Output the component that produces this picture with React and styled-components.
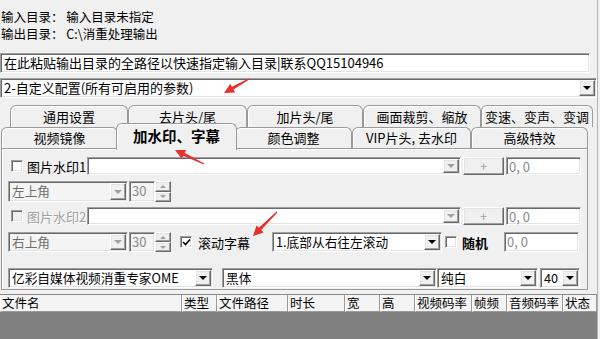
import React from "react";
import styled, { createGlobalStyle, css } from "styled-components";

const GlobalStyle = createGlobalStyle`
  html, body { margin: 0; padding: 0; background: #f0f0f0; }
  body {
    font-family: "Noto Sans CJK SC", "Microsoft YaHei", sans-serif;
    font-size: 13px;
    color: #000;
  }
`;

const sunken = css`
  box-sizing: border-box;
  border: 1px solid;
  border-color: #a0a0a0 #ffffff #ffffff #a0a0a0;
  box-shadow: inset 1px 1px 0 #696969, inset -1px -1px 0 #e3e3e3;
`;

const raised = css`
  box-sizing: border-box;
  border: 1px solid;
  border-color: #ffffff #696969 #696969 #ffffff;
  box-shadow: inset -1px -1px 0 #a0a0a0, inset 1px 1px 0 #e3e3e3;
  background: #f0f0f0;
`;

const Window = styled.div`
  position: relative;
  width: 597px;
  height: 339px;
  overflow: hidden;
  border-right: 1px solid #b4b4b4;
  display: flex;
  flex-direction: column;
`;

const Info = styled.div`
  padding: 8px 0 0 1px;
`;

const Line = styled.div`
  font-size: 12.5px;
  line-height: 17px;
  height: 17px;
  white-space: pre;
`;

const PathInput = styled.div`
  ${sunken};
  margin-top: 11px;
  width: 590px;
  height: 20px;
  background: #fff;
  padding-left: 3px;
  font-size: 13px;
  line-height: 18px;
  white-space: nowrap;
`;

const Combo = styled.div`
  ${sunken};
  width: ${(p) => p.$w}px;
  height: 100%;
  display: flex;
  align-items: stretch;
  background: ${(p) => (p.$off ? "#f4f4f4" : "#fff")};
  color: ${(p) => (p.$off ? "#6d6d6d" : "#000")};
  flex-shrink: 0;
`;

const ComboText = styled.div`
  flex: 1;
  padding-left: 3px;
  font-size: ${(p) => p.$fs || 12.7}px;
  line-height: 17px;
  white-space: nowrap;
  overflow: hidden;
`;

const ArrowBtn = styled.div`
  ${raised};
  width: 16px;
  margin: 1px 1px 1px 0;
  display: flex;
  align-items: center;
  justify-content: center;
`;

const Tri = styled.span`
  width: 0;
  height: 0;
  border-left: ${(p) => (p.$small ? 3 : 4)}px solid transparent;
  border-right: ${(p) => (p.$small ? 3 : 4)}px solid transparent;
  border-${(p) => (p.$up ? "bottom" : "top")}: ${(p) => (p.$small ? 3 : 4)}px solid
    ${(p) => (p.$off ? "#a0a0a0" : "#000")};
`;

const Preset = styled.div`
  margin-top: 5px;
  height: 20px;
  display: flex;
`;

const Tabs = styled.div`
  margin-top: 7px;
  display: flex;
  flex-direction: column;
`;

const TabRow = styled.div`
  display: flex;
  height: ${(p) => p.$h}px;
  padding-left: ${(p) => p.$indent}px;
  position: relative;
`;

const Tab = styled.div`
  box-sizing: border-box;
  width: ${(p) => p.$w}px;
  height: ${(p) => p.$h}px;
  flex-shrink: 0;
  border: 1px solid #9a9a9a;
  border-bottom: none;
  border-radius: 6px 6px 0 0;
  box-shadow: inset 1px 1px 0 #ffffff;
  background: #f0f0f0;
  text-align: center;
  font-size: 13px;
  line-height: ${(p) => p.$lh}px;
  white-space: nowrap;
  ${(p) =>
    p.$active &&
    css`
      position: relative;
      z-index: 2;
      width: ${p.$w + 4}px;
      margin: -4px -2px 0;
      height: ${p.$h + 6}px;
      font-size: 14.5px;
      font-weight: 700;
      line-height: ${p.$lh + 3}px;
    `}
`;

const Panel = styled.div`
  box-sizing: border-box;
  margin-left: 1px;
  width: 587px;
  height: 142px;
  border: 1px solid #9a9a9a;
  box-shadow: inset 1px 1px 0 #ffffff;
  padding: 0 0 0 6px;
  display: flex;
  flex-direction: column;
`;

const Row = styled.div`
  display: flex;
  align-items: center;
  height: ${(p) => p.$h}px;
  margin-top: ${(p) => p.$mt}px;
`;

const Box = styled.div`
  ${sunken};
  width: 12px;
  height: 12px;
  flex-shrink: 0;
  margin-left: ${(p) => p.$ml || 0}px;
  background: ${(p) => (p.$off ? "#f0f0f0" : "#fff")};
  display: flex;
  align-items: center;
  justify-content: center;
`;

const Label = styled.span`
  margin-left: ${(p) => p.$ml || 0}px;
  width: ${(p) => p.$w}px;
  flex-shrink: 0;
  font-size: 13px;
  line-height: 17px;
  white-space: nowrap;
  font-weight: ${(p) => (p.$bold ? 700 : 400)};
  color: ${(p) => (p.$off ? "#a0a0a0" : "#000")};
  text-shadow: ${(p) => (p.$off ? "1px 1px 0 #fff" : "none")};
`;

const Field = styled.div`
  ${sunken};
  width: ${(p) => p.$w}px;
  height: 100%;
  margin-left: ${(p) => p.$ml || 0}px;
  flex-shrink: 0;
  background: ${(p) => (p.$off ? "#f4f4f4" : "#fff")};
  color: #8a8a8a;
  padding-left: 2px;
  font-size: 13px;
  line-height: 17px;
  white-space: nowrap;
`;

const PlusBtn = styled.div`
  ${raised};
  width: 41px;
  height: 100%;
  margin-left: 2px;
  flex-shrink: 0;
  color: #a0a0a0;
  text-align: center;
  font-size: 12px;
  line-height: 15px;
`;

const UpDown = styled.div`
  width: 16px;
  height: 100%;
  flex-shrink: 0;
  display: flex;
  flex-direction: column;
`;

const Half = styled.div`
  ${raised};
  flex: 1;
  display: flex;
  align-items: center;
  justify-content: center;
`;

const Spacer = styled.div`
  width: ${(p) => p.$w}px;
  flex-shrink: 0;
`;

const Header = styled.div`
  margin-top: 4px;
  height: 18px;
  display: flex;
  border-top: 1px solid #8a8a8a;
  box-sizing: border-box;
  background: #f4f4f4;
`;

const Col = styled.div`
  box-sizing: border-box;
  width: ${(p) => p.$w}px;
  flex-shrink: 0;
  border-left: 1px solid #fff;
  border-right: 1px solid #9a9a9a;
  border-bottom: 1px solid #9a9a9a;
  padding-left: 1px;
  font-size: 12.5px;
  line-height: 16px;
  white-space: nowrap;
`;

const ListBody = styled.div`
  flex: 1;
  background: #808080;
`;

const Overlay = styled.svg`
  position: absolute;
  left: 0;
  top: 0;
  pointer-events: none;
`;

function Dropdown({ w, text, off, arrowOff, fs }) {
  return (
    <Combo $w={w} $off={off}>
      <ComboText $fs={fs}>{text}</ComboText>
      <ArrowBtn>
        <Tri $off={arrowOff} />
      </ArrowBtn>
    </Combo>
  );
}

function Spinner({ value }) {
  return (
    <>
      <Field $w={26} $ml={1} $off>
        {value}
      </Field>
      <UpDown>
        <Half>
          <Tri $up $small $off />
        </Half>
        <Half>
          <Tri $small $off />
        </Half>
      </UpDown>
    </>
  );
}

function Check({ checked, off, ml }) {
  return (
    <Box $off={off} $ml={ml}>
      {checked && (
        <svg width="9" height="8" viewBox="0 0 9 8">
          <path d="M1 4 L3.5 6.5 L8 1.5" fill="none" stroke="#000" strokeWidth="1.6" />
        </svg>
      )}
    </Box>
  );
}

function Arrow({ x1, y1, x2, y2 }) {
  const dx = x2 - x1;
  const dy = y2 - y1;
  const len = Math.hypot(dx, dy);
  const ux = dx / len;
  const uy = dy / len;
  const nx = -uy;
  const ny = ux;
  const bx = x2 - ux * 10;
  const by = y2 - uy * 10;
  const pt = (x, y) => `${x.toFixed(1)},${y.toFixed(1)}`;
  const pts = [
    pt(x1 + nx * 0.6, y1 + ny * 0.6),
    pt(bx + nx * 1.6, by + ny * 1.6),
    pt(bx + nx * 5, by + ny * 5),
    pt(x2, y2),
    pt(bx - nx * 5, by - ny * 5),
    pt(bx - nx * 1.6, by - ny * 1.6),
    pt(x1 - nx * 0.6, y1 - ny * 0.6),
  ].join(" ");
  return <polygon points={pts} fill="#e8302c" />;
}

const backTabs = [
  ["通用设置", 118],
  ["去片头/尾", 119],
  ["加片头/尾", 116],
  ["画面裁剪、缩放", 118],
  ["变速、变声、变调", 112],
];

const frontTabs = [
  ["视频镜像", 117],
  ["加水印、字幕", 117, true],
  ["颜色调整", 117],
  ["VIP片头, 去水印", 119],
  ["高级特效", 117],
];

const columns = [
  ["文件名", 182],
  ["类型", 35],
  ["文件路径", 71],
  ["时长", 57],
  ["宽", 35],
  ["高", 35],
  ["视频码率", 57],
  ["帧频", 35],
  ["音频码率", 56],
  ["状态", 34],
];

export default function App() {
  return (
    <>
      <GlobalStyle />
      <Window>
        <Info>
          <Line>输入目录： 输入目录未指定</Line>
          <Line>输出目录： C:\消重处理输出</Line>
        </Info>
        <PathInput>在此粘贴输出目录的全路径以快速指定输入目录|联系QQ15104946</PathInput>
        <Preset>
          <Dropdown w={597} text="2-自定义配置(所有可启用的参数)" fs={13} />
        </Preset>
        <Tabs>
          <TabRow $h={22} $indent={10}>
            {backTabs.map(([t, w]) => (
              <Tab key={t} $w={w} $h={22} $lh={21}>
                {t}
              </Tab>
            ))}
          </TabRow>
          <TabRow $h={21} $indent={1}>
            {frontTabs.map(([t, w, a]) => (
              <Tab key={t} $w={w} $h={21} $lh={20} $active={a}>
                {t}
              </Tab>
            ))}
          </TabRow>
          <Panel>
            <Row $h={18} $mt={8}>
              <Check ml={3} />
              <Label $ml={4} $w={60}>
                图片水印1
              </Label>
              <Dropdown w={374} text="" arrowOff />
              <PlusBtn>+</PlusBtn>
              <Field $w={75} $ml={2}>
                0, 0
              </Field>
            </Row>
            <Row $h={21} $mt={6}>
              <Dropdown w={120} text="左上角" off arrowOff />
              <Spinner value="30" />
            </Row>
            <Row $h={18} $mt={5}>
              <Check ml={3} off />
              <Label $ml={4} $w={60} $off>
                图片水印2
              </Label>
              <Dropdown w={374} text="" arrowOff />
              <PlusBtn>+</PlusBtn>
              <Field $w={75} $ml={2}>
                0, 0
              </Field>
            </Row>
            <Row $h={20} $mt={7}>
              <Dropdown w={120} text="右上角" off arrowOff />
              <Spinner value="30" />
              <Spacer $w={9} />
              <Check checked />
              <Label $ml={6} $w={74}>
                滚动字幕
              </Label>
              <Dropdown w={170} text="1.底部从右往左滚动" />
              <Check ml={3} />
              <Label $ml={5} $w={42} $bold>
                随机
              </Label>
              <Field $w={75}>0, 0</Field>
            </Row>
            <Row $h={20} $mt={16}>
              <Dropdown w={205} text="亿彩自媒体视频消重专家OME" />
              <Spacer $w={9} />
              <Dropdown w={215} text="黑体" />
              <Dropdown w={101} text="纯白" />
              <Spacer $w={2} />
              <Dropdown w={40} text="40" />
            </Row>
          </Panel>
        </Tabs>
        <Header>
          {columns.map(([t, w]) => (
            <Col key={t} $w={w}>
              {t}
            </Col>
          ))}
        </Header>
        <ListBody />
        <Overlay width="600" height="339" viewBox="0 0 600 339">
          <Arrow x1={249} y1={79} x2={224} y2={93} />
          <Arrow x1={204} y1={164} x2={175} y2={150} />
          <Arrow x1={277} y1={212} x2={253} y2={236} />
        </Overlay>
      </Window>
    </>
  );
}
